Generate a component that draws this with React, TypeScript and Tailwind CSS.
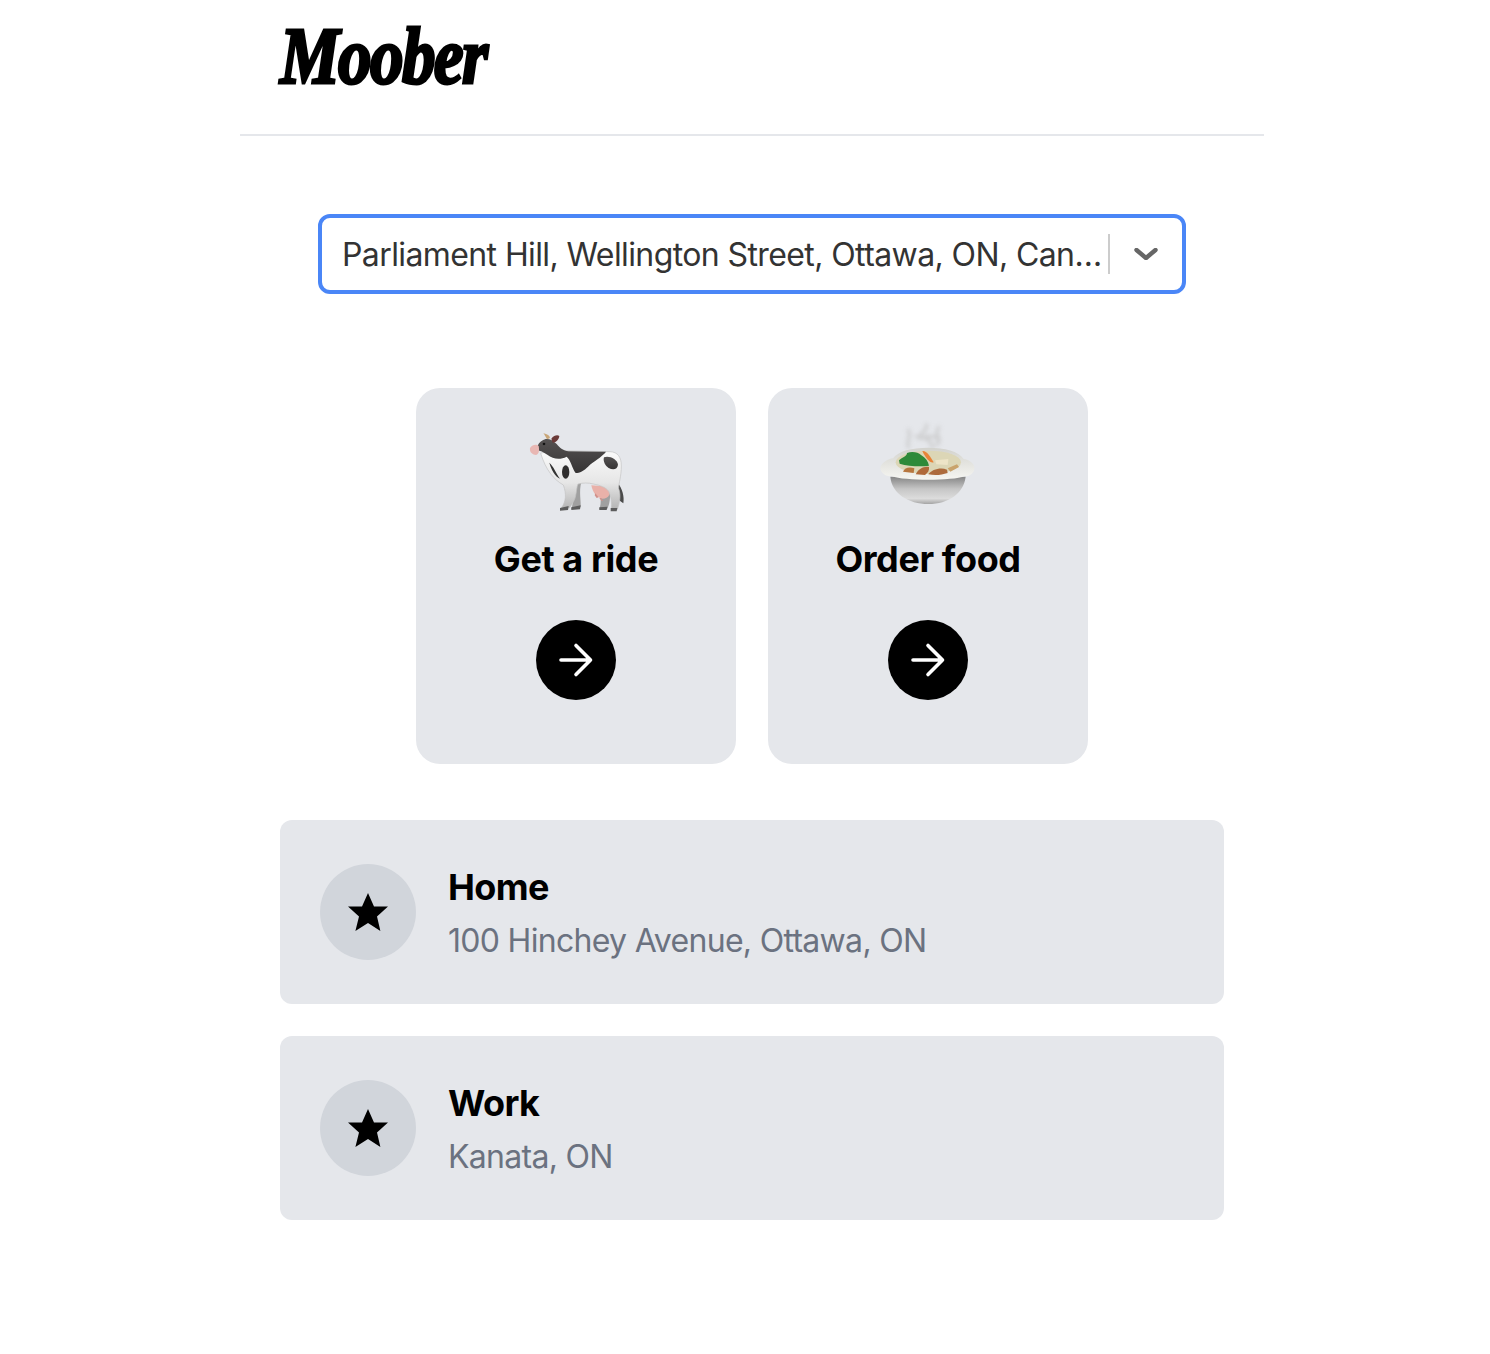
const places = [
  { name: "Home", address: "100 Hinchey Avenue, Ottawa, ON" },
  { name: "Work", address: "Kanata, ON" },
];

function CowIcon() {
  return (
    <svg viewBox="3 0 390 300" className="h-[100px] w-[130px]">
      <defs>
        <linearGradient id="cowBody" x1="0" y1="0" x2="0" y2="1">
          <stop offset="0" stopColor="#fbfbfb" />
          <stop offset="0.55" stopColor="#e6e6e6" />
          <stop offset="1" stopColor="#b4b4b4" />
        </linearGradient>
        <linearGradient id="cowDark" x1="0" y1="0" x2="0" y2="1">
          <stop offset="0" stopColor="#555252" />
          <stop offset="1" stopColor="#363434" />
        </linearGradient>
      </defs>
      {/* tail and far legs */}
      <path d="M324 190C336 205 344 230 340 250L326 240C324 222 320 205 316 195Z" fill="#4a4a4a" />
      <path d="M214 186C206 215 214 245 212 262L184 268C192 240 192 215 184 195Z" fill="#a0a0a0" />
      <path d="M300 205C302 235 298 255 292 266L268 268C276 245 272 222 262 200Z" fill="#a0a0a0" />
      {/* udder */}
      <path d="M244 196L300 200C304 220 296 236 278 236C262 234 248 220 244 196Z" fill="#e9b1a9" />
      <path d="M256 220L266 232L260 234L254 226ZM272 234L280 242L274 242L268 234Z" fill="#d0908a" />
      {/* body */}
      <path d="M92 100C120 90 150 90 170 92L300 95C324 96 334 112 334 138C334 170 326 190 326 205C334 228 328 252 322 268L304 268C306 248 304 230 296 214C288 202 270 196 250 192C235 188 220 188 204 192C200 200 200 215 196 232C192 245 184 256 178 264L154 264C168 245 170 222 160 195C130 178 108 150 92 100Z" fill="url(#cowBody)" stroke="#c2c2c2" strokeWidth="2" />
      {/* back patch and head */}
      <path d="M96 62C110 52 125 58 140 72C150 84 160 92 176 94L288 95C280 106 262 118 240 134C224 150 210 162 196 158C185 140 182 120 170 110C150 120 130 118 112 104C100 96 90 92 82 90C80 78 86 68 96 62Z" fill="url(#cowDark)" />
      <path d="M60 84C68 72 80 72 86 78C88 90 88 102 78 105C68 104 58 98 60 84Z" fill="#e8b7b3" />
      <ellipse cx="102" cy="72" rx="4" ry="3.5" fill="#111" />
      <path d="M124 56C132 46 142 44 148 48C146 60 138 68 128 68Z" fill="#6b3a38" />
      <path d="M110 56C106 50 104 44 100 40C108 42 116 44 120 52C118 56 114 58 110 56Z" fill="#c9a678" />
      {/* spots */}
      <path d="M118 128C130 138 138 160 150 176C136 170 124 150 118 128Z" fill="#333" />
      <ellipse cx="167" cy="156" rx="11" ry="20" fill="#302e2e" />
      <path d="M282 112C298 106 322 118 324 134C322 150 308 150 296 144C286 138 278 124 282 112Z" fill="url(#cowDark)" />
      {/* hooves */}
      <path d="M150 264L176 258L174 270L150 272Z" fill="#5c5c5c" />
      <path d="M184 262L212 256L210 268L184 270Z" fill="#5c5c5c" />
      <path d="M268 262L292 260L290 270L268 270Z" fill="#5c5c5c" />
      <path d="M302 264L322 264L320 274L302 274Z" fill="#5c5c5c" />
    </svg>
  );
}

function StewIcon() {
  return (
    <svg viewBox="-6 15 390 300" className="h-[100px] w-[130px]">
      <defs>
        <linearGradient id="potBody" x1="0" y1="0" x2="0" y2="1">
          <stop offset="0" stopColor="#858585" />
          <stop offset="0.45" stopColor="#c6c6c6" />
          <stop offset="0.8" stopColor="#dcdcdc" />
          <stop offset="1" stopColor="#a4a4a4" />
        </linearGradient>
        <linearGradient id="potRim" x1="0" y1="0" x2="0" y2="1">
          <stop offset="0" stopColor="#d2d2cd" />
          <stop offset="1" stopColor="#f6f6f2" />
        </linearGradient>
        <filter id="steam" x="-50%" y="-50%" width="200%" height="200%">
          <feGaussianBlur stdDeviation="7" />
        </filter>
      </defs>
      <path d="M132 100C118 80 146 65 128 42M170 72C156 52 196 48 182 26M212 92C240 72 200 60 224 34M150 62C180 84 205 48 220 74M190 60C170 75 216 85 198 100" fill="none" stroke="#c4c4c4" strokeWidth="9" opacity="0.75" filter="url(#steam)" />
      <path d="M76 185C80 235 130 267 190 267C250 267 296 235 302 185Z" fill="url(#potBody)" />
      <path d="M84 130C70 132 50 142 46 158C46 172 60 184 80 184C120 198 260 198 300 184C316 184 330 172 328 155C324 142 310 134 296 132C280 108 240 98 190 98C140 98 100 108 84 130Z" fill="url(#potRim)" />
      <ellipse cx="190" cy="142" rx="98" ry="35" fill="#dcd6b6" />
      <path d="M102 136C112 126 126 124 126 114C142 108 160 112 168 120C182 128 190 140 192 152C170 156 130 154 104 146Z" fill="#2e8a39" />
      <path d="M172 108C184 106 196 124 206 142C196 146 182 130 172 108Z" fill="#e8843a" />
      <path d="M210 136L250 132L248 150L214 148Z" fill="#ede4c7" />
      <path d="M114 170C118 158 134 154 148 160L146 174Z" fill="#b7773f" />
      <path d="M152 178C160 160 180 152 192 156C194 166 188 174 180 180Z" fill="#b06a3a" />
      <path d="M190 178C200 164 226 156 246 164L248 174C230 180 210 182 190 178Z" fill="#ad6b3d" />
      <path d="M248 160L276 148L282 156L256 170Z" fill="#c9a36c" />
    </svg>
  );
}

function ArrowIcon() {
  return (
    <svg viewBox="0 0 40 40" className="h-10 w-10" fill="none" stroke="white" strokeWidth="3.6" strokeLinecap="round" strokeLinejoin="round">
      <path d="M5 20H34.5M20 5.5L34.5 20L20 34.5" />
    </svg>
  );
}

function ActionCard({ icon, label }: { icon: React.ReactNode; label: string }) {
  return (
    <div className="flex h-[376px] w-[320px] flex-col items-center rounded-3xl bg-[#e5e7eb] pt-8">
      {icon}
      <h3 className="mt-[19px] text-[36px] leading-[40px] font-bold tracking-[-0.4px] text-black">{label}</h3>
      <div className="mt-[41px] flex h-20 w-20 items-center justify-center rounded-full bg-black">
        <ArrowIcon />
      </div>
    </div>
  );
}

function PlaceRow({ name, address }: { name: string; address: string }) {
  return (
    <div className="flex h-[184px] items-center gap-8 rounded-xl bg-[#e5e7eb] px-10">
      <div className="flex h-24 w-24 items-center justify-center rounded-full bg-[#d1d5db]">
        <svg viewBox="0 0 40 38" className="h-[38px] w-10" fill="black">
          <path d="M20 0L26 13.6L40 13.6L29 23.5L32.4 38L20 30L7.4 38L11 23.5L0 13.6L14 13.6Z" />
        </svg>
      </div>
      <div className="pt-[3px]">
        <h3 className="text-[36px] leading-[40px] font-bold tracking-[-0.6px] text-black">{name}</h3>
        <p className="mt-[14px] text-[32px] leading-[40px] tracking-[-0.7px] text-[#6b7280]">{address}</p>
      </div>
    </div>
  );
}

export default function App() {
  return (
    <div className="ml-[240px] min-h-[1354px] w-[1024px] bg-white font-['Inter',sans-serif]">
      <header className="h-[136px] border-b-2 border-[#e5e7eb] pl-10">
        <div className="origin-left scale-x-[0.84] pt-[12px] font-['Liberation_Serif',serif] text-[80px] leading-[88px] font-bold tracking-[-2px] text-black italic [-webkit-text-stroke:3px_black]">
          Moober
        </div>
      </header>

      <div className="mx-auto mt-[78px] flex h-20 w-[868px] items-center rounded-xl border-4 border-[#4a86f7] bg-white pl-5">
        <span className="w-[758px] pt-[2px] text-[32px] tracking-[-0.6px] whitespace-nowrap text-[#333333]">
          Parliament Hill, Wellington Street, Ottawa, ON, Can…
        </span>
        <span className="ml-2 h-10 w-[2px] bg-[#cccccc]" />
        <svg viewBox="0 0 24 12" className="ml-[24px] h-[12px] w-6" fill="none" stroke="#666666" strokeWidth="4.4" strokeLinecap="round" strokeLinejoin="round">
          <path d="M2.5 2L12 10L21.5 2" />
        </svg>
      </div>

      <div className="mt-[94px] flex justify-center gap-8">
        <ActionCard icon={<CowIcon />} label="Get a ride" />
        <ActionCard icon={<StewIcon />} label="Order food" />
      </div>

      <div className="mx-10 mt-14 flex flex-col gap-8">
        {places.map((place) => (
          <PlaceRow key={place.name} {...place} />
        ))}
      </div>
    </div>
  );
}
